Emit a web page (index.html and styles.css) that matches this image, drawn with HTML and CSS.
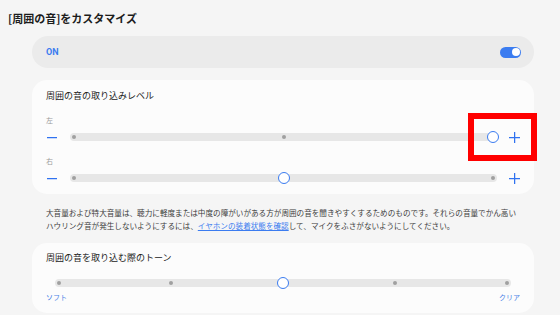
FILE: index.html
```html
<!DOCTYPE html>
<html lang="ja">

<head>
    <meta charset="UTF-8">
    <title>周囲の音をカスタマイズ</title>
    <link rel="stylesheet" href="styles.css">
</head>

<body>
    <div class="page">
        <h1 class="title">[周囲の音]をカスタマイズ</h1>

        <div class="card switch-card">
            <span class="on">ON</span>
            <span class="toggle"><span class="toggle-knob"></span></span>
        </div>

        <div class="card level-card">
            <div class="card-title">周囲の音の取り込みレベル</div>

            <div class="side">左</div>
            <div class="row">
                <span class="minus"></span>
                <div class="track">
                    <span class="dot"></span><span class="dot"></span><span class="dot"></span>
                    <span class="knob" style="left: 99%"></span>
                </div>
                <span class="plus"></span>
            </div>

            <div class="side">右</div>
            <div class="row">
                <span class="minus"></span>
                <div class="track">
                    <span class="dot"></span><span class="dot"></span><span class="dot"></span>
                    <span class="knob" style="left: 50%"></span>
                </div>
                <span class="plus"></span>
            </div>
        </div>

        <p class="note">大音量および特大音量は、聴力に軽度または中度の障がいがある方が周囲の音を聞きやすくするためのものです。それらの音量でかん高い<br>ハウリング音が発生しないようにするには、<a href="#">イヤホンの装着状態を確認</a>して、マイクをふさがないようにしてください。</p>

        <div class="card tone-card">
            <div class="card-title">周囲の音を取り込む際のトーン</div>
            <div class="track tone-track">
                <span class="dot"></span><span class="dot"></span><span class="dot"></span><span class="dot"></span><span class="dot"></span>
                <span class="knob" style="left: 50%"></span>
            </div>
            <div class="tone-labels">
                <span>ソフト</span>
                <span>クリア</span>
            </div>
        </div>

        <div class="highlight"></div>
    </div>
</body>

</html>
```

FILE: styles.css
```css
html,
body {
    margin: 0;
    height: 100%;
}

body {
    background: #f5f5f5;
    font-family: "Noto Sans CJK JP", "Noto Sans", sans-serif;
    color: #1c1c1c;
}

.page {
    position: relative;
    padding: 10px 26px 0 8px;
}

.title {
    margin: 0;
    font-size: 11px;
    line-height: 16px;
    font-weight: bold;
}

.card {
    margin-left: 24px;
    border-radius: 15px;
    background: #fcfcfc;
    padding: 0 13px 0 14px;
}

.switch-card {
    margin-top: 10px;
    height: 32px;
    border-radius: 16px;
    background: #ebebeb;
    display: flex;
    align-items: center;
    justify-content: space-between;
}

.on {
    color: #3b7cf0;
    font-family: Roboto, "Noto Sans", sans-serif;
    font-weight: bold;
    font-size: 9px;
}

.toggle {
    width: 21px;
    height: 11px;
    border-radius: 6px;
    background: #3b7cf0;
    display: flex;
    align-items: center;
    justify-content: flex-end;
    padding: 0 1.5px;
    box-sizing: border-box;
}

.toggle-knob {
    width: 8px;
    height: 8px;
    border-radius: 50%;
    background: #fff;
}

.level-card {
    margin-top: 12px;
    padding-top: 9px;
    padding-bottom: 9px;
}

.card-title {
    font-size: 9px;
    line-height: 14px;
    color: #222;
}

.side {
    margin-top: 12px;
    font-size: 7px;
    line-height: 10px;
    color: #9a9a9a;
}

.row {
    margin-top: 5px;
    height: 14px;
    display: flex;
    align-items: center;
    padding-left: 1px;
}

.minus {
    width: 10px;
    height: 1px;
    background: #2f72f0;
    box-shadow: 0 0.5px 0 rgba(47, 114, 240, 0.5);
    margin-right: 13px;
}

.plus {
    position: relative;
    width: 11px;
    height: 11px;
    margin-left: 12px;
    margin-right: 1px;
}

.plus::before,
.plus::after {
    content: "";
    position: absolute;
    background: #2f72f0;
}

.plus::before {
    left: 0;
    top: 5px;
    width: 11px;
    height: 1px;
    box-shadow: 0 0.5px 0 rgba(47, 114, 240, 0.5);
}

.plus::after {
    top: 0;
    left: 5px;
    width: 1px;
    height: 11px;
    box-shadow: 0.5px 0 0 rgba(47, 114, 240, 0.5);
}

.track {
    position: relative;
    flex: 1;
    height: 8px;
    border-radius: 4px;
    background: #e7e7e7;
    display: flex;
    align-items: center;
    justify-content: space-between;
    padding: 0 2px;
}

.dot {
    width: 4px;
    height: 4px;
    border-radius: 50%;
    background: #a0a0a0;
}

.knob {
    position: absolute;
    top: 50%;
    width: 12px;
    height: 12px;
    box-sizing: border-box;
    border: 1.5px solid #3b7cf0;
    border-radius: 50%;
    background: #fff;
    transform: translate(-50%, -50%);
}

.note {
    margin: 12px 0 0 38px;
    font-size: 7.6px;
    line-height: 13px;
    color: #3c3c3c;
    white-space: nowrap;
}

.note a {
    color: #3b7cf0;
}

.tone-card {
    margin-top: 11px;
    padding-top: 8px;
    padding-bottom: 11px;
}

.tone-track {
    margin: 14px 10px 0 9px;
}

.tone-labels {
    margin-top: 5px;
    display: flex;
    justify-content: space-between;
    font-size: 7px;
    line-height: 10px;
    color: #4a82e6;
    padding-right: 1px;
}

.highlight {
    position: absolute;
    top: 113px;
    left: 468px;
    width: 69px;
    height: 48px;
    box-sizing: border-box;
    border: 6px solid #ff0000;
}
```
